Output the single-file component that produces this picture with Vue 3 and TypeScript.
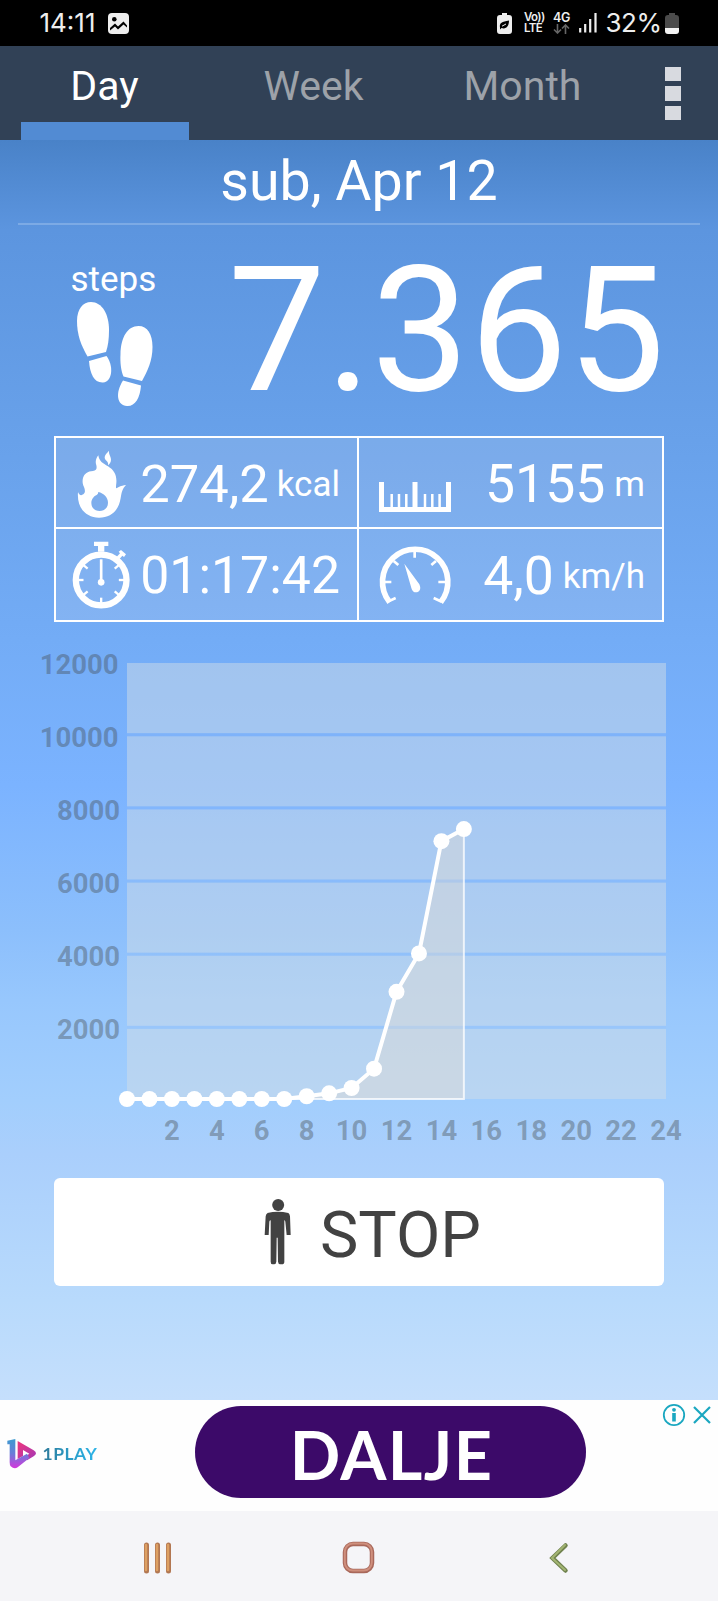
<script setup lang="ts">
interface Tab {
  label: string
  active: boolean
}

const tabs: Tab[] = [
  { label: 'Day', active: true },
  { label: 'Week', active: false },
  { label: 'Month', active: false },
]

// Chart geometry, in the chart's own units (1 unit = 1px)
const left = 127
const top = 23
const right = 666
const base = 459
const hourStep = (right - left) / 24
const rowStep = 73.15

const hourly: number[] = [0, 0, 0, 0, 0, 0, 0, 0, 75, 155, 300, 830, 2930, 3980, 7050, 7380]
const points = hourly.map((v, i) => ({
  x: left + i * hourStep,
  y: base - (v / 2000) * rowStep,
}))
const line = points.map((p) => `${p.x},${p.y}`).join(' ')
const area = `${left},${base} ${line} ${points[points.length - 1].x},${base}`

const gridY = [1, 2, 3, 4, 5].map((n) => 460.5 - n * rowStep)
const edges = [...gridY].reverse()
const bands = [...edges, base + 1.5].map((end, i) => {
  const y1 = i === 0 ? top : edges[i - 1] + 1.5
  return { y: y1, h: end - 1.5 - y1 }
})
const yLabels = [12000, 10000, 8000, 6000, 4000, 2000].map((value, i) => ({
  value,
  x: value >= 10000 ? 118.6 : 120,
  y: 33.5 + i * rowStep,
}))
const xLabels = Array.from({ length: 12 }, (_, i) => (i + 1) * 2)
const ticks = [50, 90, 130, 180, 230, 270, 310]
</script>

<template>
  <div class="screen">
    <div class="status">
      <span class="clock">14:11</span>
      <svg class="photo" width="21" height="21" viewBox="0 0 21 21">
        <rect width="21" height="21" rx="4" fill="#eee" />
        <circle cx="6.3" cy="6.3" r="2.3" fill="#000" />
        <path d="M2 15 L7 10.5 L10 13.5 L15.5 8.5 L19 12.5 V14.500 L15.5 11.500 L10 16.500 L7 13.500 L2 17.500Z" fill="#000" />
      </svg>
      <span class="grow"></span>
      <svg class="saver" width="15" height="21" viewBox="0 0 15 21">
        <path d="M5 0h5v2h2a3 3 0 0 1 3 3v13a3 3 0 0 1-3 3H3a3 3 0 0 1-3-3V5a3 3 0 0 1 3-3h2z" fill="#eee" />
        <path d="M3 14.5C2 10 5 8.500 12 7.500c0 6-3 9-7.500 7.500L3 16.500z" fill="#000" />
        <path d="M5 13.200l4-2.200" stroke="#eee" stroke-width="1" />
      </svg>
      <span class="volte"><b>Vo))</b><b>LTE</b></span>
      <span class="net">
        <b>4G</b>
        <svg width="17" height="10" viewBox="0 0 17 10">
          <path d="M4.500 0v9M1 5.500l3.500 3.500L8 5.500M12.500 10V1M9 4.500L12.500 1 16 4.500" fill="none" stroke="#666" stroke-width="1.600" />
        </svg>
      </span>
      <svg class="bars" width="18" height="20" viewBox="0 0 18 20">
        <path d="M1.200 15v4.500M6.200 11v8.500M11.200 6v13.500M16.500 0v19.500" stroke="#eee" stroke-width="2.200" />
      </svg>
      <span class="percent">32%</span>
      <svg class="battery" width="14" height="21" viewBox="0 0 14 21">
        <path d="M4 0h6v2h1a3 3 0 0 1 3 3v10H0V5a3 3 0 0 1 3-3h1z" fill="#4b4b4b" />
        <path d="M0 15h14v3a3 3 0 0 1-3 3H3a3 3 0 0 1-3-3z" fill="#f2f2f2" />
      </svg>
    </div>

    <header class="header">
      <div v-for="t in tabs" :key="t.label" class="tab" :class="{ active: t.active }">
        <span class="tab-label">{{ t.label }}</span>
        <span class="indicator"></span>
      </div>
      <div class="menu"><i></i><i></i><i></i></div>
    </header>

    <main class="main">
      <h1 class="date">sub, Apr 12</h1>

      <section class="steps">
        <div class="steps-side">
          <span class="steps-label">steps</span>
          <svg width="80" height="110" viewBox="75 300 80 110" fill="#fff">
            <path d="M87.500 356.500C81 345 77 335 77 321c0-12 6-19 14-19 11 0 18 12 18 28 0 9-1 16-3 22z" />
            <path d="M89 361l17.500-5c7 9 6.500 25.500-3.500 26.500-9 .5-13-8.500-14-21.500z" />
            <path d="M123.500 376.500C121 371 120 362 120.500 354c.5-17 7-28 18-28 9 0 14 8 14 21 0 14-5 24-10.500 34z" />
            <path d="M123 380.500l18 5c-1 13-6 21-14 20.500-10-.5-12-13-4-25.500z" />
          </svg>
        </div>
        <div class="count">7.365</div>
      </section>

      <section class="stats">
        <div class="cell">
          <svg class="flame" width="52" height="70" viewBox="109 55 156 210">
            <path fill="#fff" fill-rule="evenodd" d="M176 74C178 92 190 98 205 107C224 119 232 134 230 157C229 165 229 169 229 173C237 170 242 165 259 163C248 174 246 185 243 202C237 240 214 261 178 261C139 260 111 233 115 184C118 193 124 196 131 191C138 186 136 177 133 169C128 158 128 150 130 142C134 129 144 122 160 121C171 119 172 113 170 104C166 93 169 83 176 74ZM176 184C192 188 205 200 205 216C205 231 194 241 180 241C165 241 155 231 155 217C155 205 163 196 171 193Q176 190 176 184Z" />
            <path fill="#fff" d="M208 60C207 72 214 77 214 87C214 95 210 99 205 104C208 91 195 91 195 80C195 72 202 68 208 60Z" />
          </svg>
          <span class="value small">274,2</span><span class="unit">kcal</span>
        </div>
        <div class="cell">
          <svg class="ruler" width="72" height="30" viewBox="0 0 72 30">
            <path d="M0 0h5v25h28.500V0h5v25H67V0h5v30H0z" fill="#fff" />
            <path d="M12.700 12v14M20 12v14M27.300 12v14M46 12v14M53.300 12v14M60.600 12v14" stroke="#fff" stroke-width="2.500" />
          </svg>
          <span class="value">5155</span><span class="unit">m</span>
        </div>
        <div class="cell">
          <svg class="watch" width="58" height="68" viewBox="96 335 174 204">
            <circle cx="183.500" cy="452" r="76" fill="none" stroke="#fff" stroke-width="19" />
            <path d="M162 337h43v13h-12v17h-19v-17h-12zM229 384l11-12-4-5 7-5 15 13-6 8-5-4-11 13z" fill="#fff" />
            <path v-for="a in ticks" :key="a" :transform="`rotate(${a} 183.500 452)`" d="M183.500 376v23" stroke="#fff" stroke-width="7" />
            <path d="M183.500 390v62" stroke="#fff" stroke-width="8" />
            <circle cx="183.500" cy="459" r="10" fill="#fff" />
          </svg>
          <span class="value time">01:17:42</span>
        </div>
        <div class="cell">
          <svg class="gauge" width="74" height="62" viewBox="86 345 222 186">
            <path d="M121 517A98 98 0 1 1 274 517" fill="none" stroke="#fff" stroke-width="17" />
            <path d="M196 362v21M133 393l14 12M260 393l-14 12M104 456h22M288 456h-21M116 515l23-11M277 515l-24-11" stroke="#fff" stroke-width="8" />
            <path d="M165 401L210 463C218 480 207 488 199 487C189 486 187 477 185 470Z" fill="#fff" />
          </svg>
          <span class="value">4,0</span><span class="unit">km/h</span>
        </div>
      </section>

      <svg class="chart" width="718" height="520" viewBox="0 0 718 520">
        <rect v-for="b in bands" :key="b.y" :x="left" :y="b.y" :width="right - left" :height="b.h" class="band" />
        <rect v-for="y in gridY" :key="y" :x="left" :y="y - 1.5" :width="right - left" height="3" class="gap" />
        <text v-for="l in yLabels" :key="l.value" :x="l.x" :y="l.y" text-anchor="end" class="axis">{{ l.value }}</text>
        <text v-for="n in xLabels" :key="n" :x="left + n * hourStep" y="500" text-anchor="middle" class="axis">{{ n }}</text>
        <polygon :points="area" class="area" />
        <polyline :points="line" class="line" />
        <circle v-for="p in points" :key="p.x" :cx="p.x" :cy="p.y" r="8" fill="#fff" />
      </svg>

      <button class="stop" type="button">
        <svg width="27" height="66" viewBox="734 596 81 198" fill="#424242">
          <circle cx="776.500" cy="614" r="18" />
          <path d="M744 638q32-8 63 0q4 2 5 10l2 56h-12l-4-40q-1-4-3-4v124q0 8-8 8h-4q-6 0-7-8l-1-72h-3l-1 72q-1 8-7 8h-4q-6 0-6-8V660q-3 0-4 4l-2 40h-12l3-56q1-8 6-10z" />
        </svg>
        <span class="stop-label">STOP</span>
      </button>
    </main>

    <aside class="ad">
      <div class="brand">
        <svg width="30" height="30" viewBox="0 0 90 90">
          <defs>
            <linearGradient id="bar" x1="0" y1="0" x2="0" y2="1">
              <stop offset="0" stop-color="#3d9bd0" />
              <stop offset=".5" stop-color="#6b7cd8" />
              <stop offset="1" stop-color="#d436dc" />
            </linearGradient>
            <linearGradient id="play" x1="0" y1="0" x2="1" y2="1">
              <stop offset="0" stop-color="#f0357a" />
              <stop offset="1" stop-color="#a338b8" />
            </linearGradient>
          </defs>
          <path d="M32 6L80 34Q94 43 80 52L60 64L50 56L67 44L48 33V51L32 60Z" fill="url(#play)" />
          <path d="M1 5L25 0V64L60 44L67 57L32 85Q22 92 11 82Q8 78 8 70V16H1Z" fill="url(#bar)" />
        </svg>
        <span class="brand-name">1PLAY</span>
      </div>
      <div class="cta">DALJE</div>
      <div class="ad-marks">
        <svg width="49" height="24" viewBox="0 0 49 24" fill="none" stroke="#1aa7c0">
          <circle cx="12" cy="12" r="10.200" stroke-width="1.800" />
          <path d="M12 10v8.500" stroke-width="3.600" />
          <circle cx="12" cy="6.800" r="1.900" fill="#1aa7c0" stroke="none" />
          <path d="M32 4l16 16M48 4L32 20" stroke-width="2.200" />
        </svg>
      </div>
    </aside>

    <nav class="nav">
      <svg width="31" height="34" viewBox="0 0 31 34" stroke-linecap="round">
        <path d="M4.500 4v26M15.500 4v26M26.500 4v26" stroke="#b27752" stroke-width="5" />
        <path d="M4 4v25M15 4v25M26 4v25" stroke="#dda063" stroke-width="2.500" />
      </svg>
      <svg class="home" width="33" height="33" viewBox="0 0 33 33" fill="none">
        <rect x="3" y="3" width="27" height="27" rx="8" stroke="#a9685b" stroke-width="4.500" />
        <rect x="2.800" y="2.600" width="27" height="27" rx="8" stroke="#cf8f7d" stroke-width="2" />
      </svg>
      <svg class="back" width="20" height="34" viewBox="0 0 20 34" fill="none" stroke-linecap="round">
        <path d="M16.500 4.500L3.500 17L16.500 29.500" stroke="#70824f" stroke-width="4.500" />
        <path d="M16 4L3 17L16 29" stroke="#a3b573" stroke-width="2" />
      </svg>
    </nav>
  </div>
</template>

<style>
body {
  margin: 0;
}
</style>

<style scoped>
.screen {
  width: 718px;
  height: 1601px;
  display: flex;
  flex-direction: column;
  overflow: hidden;
  font-family: Roboto, 'Liberation Sans', sans-serif;
  color: #fff;
}
.status {
  flex: none;
  height: 46px;
  box-sizing: border-box;
  padding: 0 39px 0 39px;
  display: flex;
  align-items: center;
  background: #000;
  color: #eee;
  font-family: Inter, sans-serif;
}
.clock {
  font-size: 26px;
  line-height: 46px;
  width: 68px;
  padding-left: 0.5px;
}
.grow {
  flex: 1;
}
.volte {
  display: flex;
  flex-direction: column;
  width: 20px;
  margin-left: 12px;
  font-size: 11.500px;
  line-height: 11px;
  letter-spacing: -0.6px;
}
.volte b,
.net b {
  font-weight: 600;
}
.net {
  display: flex;
  flex-direction: column;
  width: 17px;
  margin-left: 9px;
  font-size: 12.500px;
  line-height: 12px;
  letter-spacing: -0.3px;
}
.bars {
  margin-left: 8.500px;
}
.percent {
  font-size: 26px;
  line-height: 46px;
  margin-left: 9px;
  width: 55.500px;
  letter-spacing: -0.5px;
}
.battery {
  margin-left: 4px;
}
.header {
  flex: none;
  height: 94px;
  display: flex;
  background: #314156;
}
.tab {
  width: 209px;
  display: flex;
  flex-direction: column;
  align-items: center;
  justify-content: space-between;
  font-size: 41px;
  color: #9da2a9;
}
.tab-label {
  line-height: 80px;
  height: 76px;
}
.indicator {
  width: 168px;
  height: 18px;
}
.tab.active {
  color: #fff;
}
.tab.active .indicator {
  background: #528bd3;
}
.menu {
  margin-left: 38px;
  padding-top: 21px;
  display: flex;
  flex-direction: column;
  gap: 5.3px;
}
.menu i {
  width: 16px;
  height: 14.2px;
  background: #d8dae0;
}
.main {
  flex: none;
  height: 1260px;
  background: linear-gradient(#4982c8 0, #5c95df 90px, #68a1ea 300px, #73acf6 500px, #7bb3ff 645px, #8cbffc 790px, #97c7fd 860px, #a2cefd 960px, #aacffc 1015px, #b8dafc 1160px, #c5dffc 1260px);
}
.date {
  margin: 0 18px;
  height: 83px;
  border-bottom: 2px solid #7caae5;
  font-size: 55.500px;
  font-weight: 400;
  line-height: 83px;
  text-align: center;
}
.steps {
  height: 211px;
  display: flex;
  justify-content: space-between;
}
.steps-side {
  margin-left: 70.500px;
  display: flex;
  flex-direction: column;
  padding-top: 34px;
}
.steps-side svg {
  margin-left: 4.500px;
}
.steps-label {
  font-size: 35px;
  line-height: 41px;
}
.count {
  margin-right: 53px;
  font-size: 174px;
  line-height: 212px;
}
.stats {
  width: 610px;
  height: 186px;
  box-sizing: border-box;
  margin: 0 54px;
  border: 2px solid #fff;
  display: grid;
  grid-template-columns: 301px 303px;
  grid-template-rows: 89px 91px;
  gap: 2px;
  background: linear-gradient(#fff, #fff) 301px 0 / 2px 100% no-repeat,
    linear-gradient(#fff, #fff) 0 89px / 100% 2px no-repeat;
}
.cell {
  display: flex;
  align-items: center;
  background: rgba(225, 228, 235, 0.15);
  padding-right: 17px;
}
.flame {
  margin-left: 20px;
  margin-top: 2px;
}
.watch {
  margin-left: 16px;
}
.ruler {
  margin-left: 20px;
  margin-top: 29px;
}
.gauge {
  margin-left: 19px;
  margin-top: 2px;
}
.value {
  margin-left: auto;
  margin-top: 2px;
  font-size: 53.500px;
  line-height: 86px;
}
.value.small {
  font-size: 52.500px;
}
.value.time {
  font-size: 51.800px;
  margin-top: 3px;
}
.unit {
  margin-left: 9px;
  margin-top: 4px;
  font-size: 35px;
  line-height: 86px;
}
.small + .unit {
  margin-left: 8px;
}
.chart {
  display: block;
  margin-top: 18px;
}
.band {
  fill: rgba(212, 221, 229, 0.48);
}
.gap {
  fill: rgba(150, 190, 245, 0.2);
}
.axis {
  font-size: 27.500px;
  font-weight: 700;
  fill: rgba(66, 71, 72, 0.39);
}
.area {
  fill: rgba(225, 219, 212, 0.42);
  stroke: rgba(255, 255, 255, 0.75);
  stroke-width: 2;
}
.line {
  fill: none;
  stroke: #fff;
  stroke-width: 4;
}
.stop {
  width: 610px;
  height: 108px;
  margin: 18px 54px 0;
  padding: 0 0 0 210px;
  border: 0;
  border-radius: 6px;
  background: #fff;
  color: #424242;
  display: flex;
  align-items: center;
  gap: 29px;
  font-family: inherit;
  font-size: 64.500px;
}
.stop-label {
  line-height: 98px;
  margin-top: 5px;
}
.ad {
  flex: none;
  height: 111px;
  background: #fefefe;
  display: flex;
  align-items: flex-start;
}
.brand {
  width: 188px;
  padding: 39px 0 0 7px;
  display: flex;
  align-items: center;
  gap: 5.500px;
}
.brand-name {
  font-family: Lato, sans-serif;
  font-weight: 700;
  font-size: 17.500px;
  line-height: 30px;
  letter-spacing: 0.5px;
  background: linear-gradient(90deg, #2c7898, #2b9bc6 50%, #2cb4e8);
  background-clip: text;
  color: transparent;
}
.cta {
  box-sizing: border-box;
  width: 391px;
  height: 92px;
  margin-top: 6px;
  padding-left: 2px;
  border-radius: 46px;
  background: #3c0a69;
  font-family: Lato, sans-serif;
  font-weight: 700;
  font-size: 66.500px;
  letter-spacing: 1.400px;
  line-height: 96px;
  text-align: center;
}
.ad-marks {
  margin-left: 76px;
  padding-top: 3px;
}
.nav {
  flex: none;
  height: 90px;
  box-sizing: border-box;
  background: #f5f5f8;
  display: flex;
  align-items: center;
  padding: 3px 0 0 142px;
}
.home {
  margin-left: 168.500px;
}
.back {
  margin-left: 174.500px;
}
</style>
